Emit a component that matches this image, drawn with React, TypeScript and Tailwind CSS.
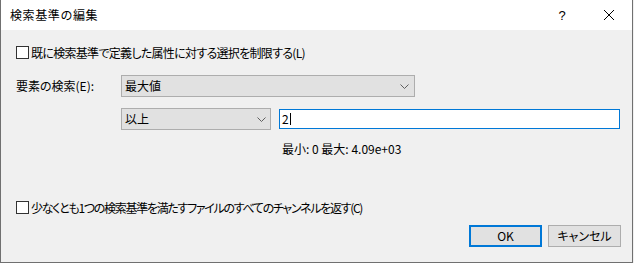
import React from 'react';

const Chevron = () => (
  <svg width="9" height="5" viewBox="0 0 9 5" className="shrink-0">
    <path d="M0.5 0.5 L4.5 4.5 L8.5 0.5" fill="none" stroke="#5f5f5f" strokeWidth="1" />
  </svg>
);

const Checkbox = () => <span className="block w-[13px] h-[13px] border border-[#333333] bg-white shrink-0" />;

export default function App() {
  return (
    <div
      className="w-[634px] h-[263px] bg-[#f0f0f0] text-[12px] text-black leading-none"
      style={{ fontFamily: '"Noto Sans CJK JP", "Noto Sans", sans-serif' }}
    >
      <div className="w-[633px] h-[263px] border-l border-r border-b border-[#707070] flex flex-col">
        {/* Title bar */}
        <div className="h-[30px] bg-white flex items-center shrink-0">
          <span className="pl-[9px] flex-1 tracking-[0.6px]">検索基準の編集</span>
          <div className="w-[46px] h-[30px] flex items-center justify-center text-[13px] pr-[2px]" style={{ fontFamily: '"Liberation Sans", sans-serif' }}>?</div>
          <div className="w-[46px] h-[30px] flex items-center justify-center">
            <svg width="10" height="10" viewBox="0 0 10 10">
              <path d="M0 0 L10 10 M10 0 L0 10" stroke="#000" strokeWidth="1" />
            </svg>
          </div>
        </div>

        {/* Body */}
        <div className="flex-1 flex flex-col pl-[15px] pt-[16px] [font-feature-settings:'palt']">
          <label className="flex items-center h-[13px] gap-[2px]">
            <Checkbox />
            <span className="tracking-[-0.7px]">既に検索基準で定義した属性に対する選択を制限する(L)</span>
          </label>

          <div className="flex items-center mt-[16px] h-[22px]">
            <span className="w-[105px]">要素の検索(E):</span>
            <div className="w-[294px] h-[22px] bg-[#e1e1e1] border border-[#adadad] flex items-center justify-between pl-[3px] pr-[5px]">
              <span>最大値</span>
              <Chevron />
            </div>
          </div>

          <div className="flex items-center mt-[11px] h-[22px] pl-[105px] gap-[8px]">
            <div className="w-[150px] h-[22px] bg-[#e1e1e1] border border-[#adadad] flex items-center justify-between pl-[3px] pr-[4px]">
              <span>以上</span>
              <Chevron />
            </div>
            <div className="w-[341px] h-[20px] bg-white border border-[#0078d7] flex items-center pl-[2px]">
              <span>2</span>
              <span className="block w-px h-[12px] bg-black ml-px" />
            </div>
          </div>

          <div className="mt-[12px] pl-[266px] h-[14px] flex items-center">最小: 0 最大: 4.09e+03</div>

          <label className="flex items-center h-[13px] gap-[2px] mt-[45px]">
            <Checkbox />
            <span className="tracking-[-1.3px]">少なくとも1つの検索基準を満たすファイルのすべてのチャンネルを返す(C)</span>
          </label>

          <div className="flex justify-end gap-[6px] mt-[11px] pr-[11px]">
            <button className="w-[73px] h-[22px] bg-[#e1e1e1] border-2 border-[#0078d7] flex items-center justify-center">OK</button>
            <button className="w-[73px] h-[22px] bg-[#e1e1e1] border border-[#adadad] flex items-center justify-center">キャンセル</button>
          </div>
        </div>
      </div>
    </div>
  );
}
